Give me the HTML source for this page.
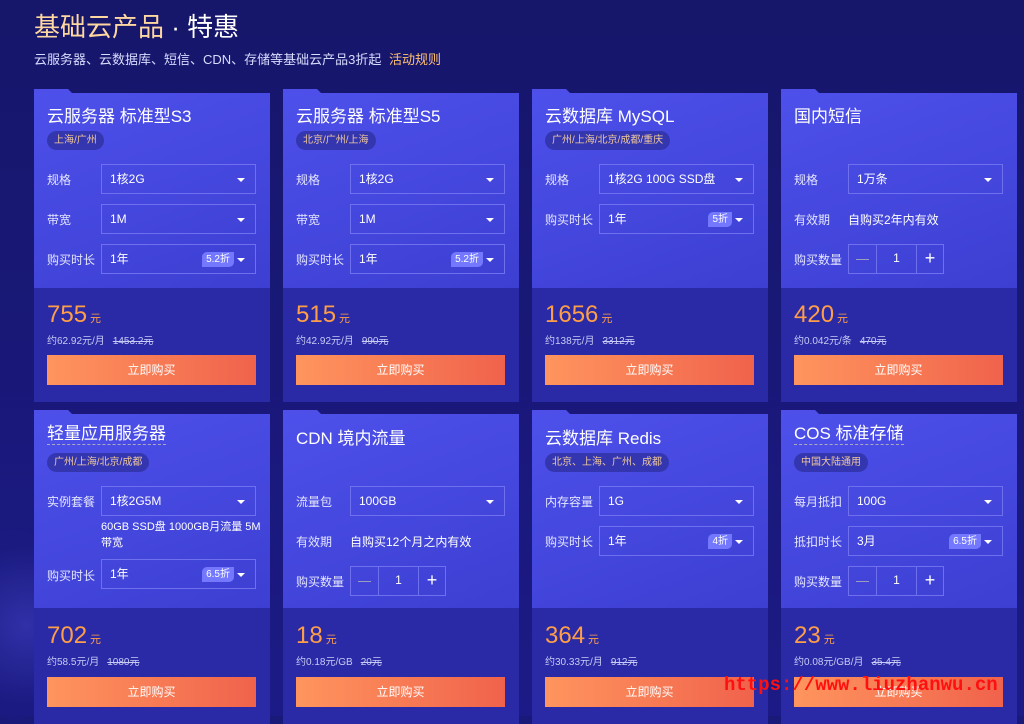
<!DOCTYPE html>
<html><head><meta charset="utf-8"><style>
*{margin:0;padding:0;box-sizing:border-box}
body{width:1024px;height:716px;overflow:hidden;background:#19197a;font-family:"Liberation Sans","Noto Sans CJK SC",sans-serif;position:relative;color:#fff}
.bg{position:absolute;inset:0;background:linear-gradient(180deg,#16166a 0%,#1c1a86 100%)}
h1{position:absolute;left:34px;top:7px;font-size:26px;font-weight:normal;color:#ffd7a0;letter-spacing:0}
h1 span{color:#fff}
.sub{position:absolute;left:34px;top:49px;font-size:13px;color:#d8dcff}
.sub b{font-weight:normal;color:#ffc070;margin-left:4px}
.card{position:absolute;width:236px;background:#2a2aa6}
.card:before{content:"";position:absolute;left:0;top:-4px;width:40px;height:6px;background:#4d4fe8;clip-path:polygon(0 0,34px 0,40px 100%,0 100%)}
.top{position:absolute;left:0;top:0;width:236px;background:linear-gradient(160deg,#4d50ea 0%,#3d3fd2 100%)}
.t{position:absolute;left:13px;font-size:17px;color:#fff;white-space:nowrap}
.t.u{border-bottom:1px dashed #aab;line-height:20px}
.tag{position:absolute;left:13px;height:19px;line-height:19px;padding:0 7px;border-radius:10px;background:#3436b0;font-size:10px;color:#f0c89c;white-space:nowrap}
.lb{position:absolute;left:13px;font-size:12px;color:#e4e6ff;white-space:nowrap}
.sel{position:absolute;left:67px;width:155px;height:30px;border:1px solid #6e70f0;font-size:12px;line-height:28px;padding-left:8px;color:#fff}
.sel:after{content:"";position:absolute;right:10px;top:13px;border:4px solid transparent;border-top:4px solid #fff;border-bottom:0}
.disc{position:absolute;right:21px;top:7px;height:15px;line-height:15px;padding:0 4px;border-radius:5px 0 5px 0;background:#7378ff;font-size:10px}
.txt{position:absolute;left:67px;font-size:12px;color:#fff;white-space:nowrap}
.step{position:absolute;left:67px;width:96px;height:30px;border:1px solid #6e70f0;display:flex}
.step div{height:28px;line-height:27px;text-align:center;font-size:13px}
.step div:nth-child(1){width:28px;border-right:1px solid #6e70f0;color:#aab}
.step div:nth-child(2){width:40px;border-right:1px solid #6e70f0;font-size:12px}
.step div:nth-child(3){flex:1;font-size:18px}
.pr{position:absolute;left:13px;font-size:24px;color:#ff9e48;white-space:nowrap}
.pr small{font-size:11px;margin-left:3px}
.ps{position:absolute;left:13px;font-size:10px;color:#c8cbf5;white-space:nowrap}
.ps s{margin-left:8px}
.btn{position:absolute;left:13px;width:209px;height:30px;line-height:30px;text-align:center;font-size:12px;background:linear-gradient(90deg,#ff955e,#f0624c)}
.wm{position:absolute;left:724px;top:674px;font-family:"Liberation Mono",monospace;font-size:19px;color:#ff1010;font-weight:bold;white-space:nowrap}
.ring{position:absolute;left:-40px;top:530px;width:110px;height:190px;border-radius:50%;background:radial-gradient(circle at 60% 50%,#3a3ab8,#1a1a80 70%);opacity:.7}
</style></head><body>
<div class="bg"></div>
<div class="ring"></div>
<h1>基础云产品<span> · 特惠</span></h1>
<div class="sub">云服务器、云数据库、短信、CDN、存储等基础云产品3折起 <b>活动规则</b></div>

<!-- Row 1 -->
<div class="card" style="left:34px;top:93px;height:309px">
<div class="top" style="height:195px"></div>
<div class="t" style="top:9px">云服务器 标准型S3</div>
<div class="tag" style="top:38px">上海/广州</div>
<div class="lb" style="top:78px">规格</div><div class="sel" style="top:71px">1核2G</div>
<div class="lb" style="top:118px">带宽</div><div class="sel" style="top:111px">1M</div>
<div class="lb" style="top:158px">购买时长</div><div class="sel" style="top:151px">1年<span class="disc">5.2折</span></div>
<div class="pr" style="top:208px">755<small>元</small></div>
<div class="ps" style="top:239px">约62.92元/月<s>1453.2元</s></div>
<div class="btn" style="top:262px">立即购买</div>
</div>
<div class="card" style="left:283px;top:93px;height:309px">
<div class="top" style="height:195px"></div>
<div class="t" style="top:9px">云服务器 标准型S5</div>
<div class="tag" style="top:38px">北京/广州/上海</div>
<div class="lb" style="top:78px">规格</div><div class="sel" style="top:71px">1核2G</div>
<div class="lb" style="top:118px">带宽</div><div class="sel" style="top:111px">1M</div>
<div class="lb" style="top:158px">购买时长</div><div class="sel" style="top:151px">1年<span class="disc">5.2折</span></div>
<div class="pr" style="top:208px">515<small>元</small></div>
<div class="ps" style="top:239px">约42.92元/月<s>990元</s></div>
<div class="btn" style="top:262px">立即购买</div>
</div>
<div class="card" style="left:532px;top:93px;height:309px">
<div class="top" style="height:195px"></div>
<div class="t" style="top:9px">云数据库 MySQL</div>
<div class="tag" style="top:38px">广州/上海/北京/成都/重庆</div>
<div class="lb" style="top:78px">规格</div><div class="sel" style="top:71px">1核2G 100G SSD盘</div>
<div class="lb" style="top:118px">购买时长</div><div class="sel" style="top:111px">1年<span class="disc">5折</span></div>
<div class="pr" style="top:208px">1656<small>元</small></div>
<div class="ps" style="top:239px">约138元/月<s>3312元</s></div>
<div class="btn" style="top:262px">立即购买</div>
</div>
<div class="card" style="left:781px;top:93px;height:309px">
<div class="top" style="height:195px"></div>
<div class="t" style="top:9px">国内短信</div>
<div class="lb" style="top:78px">规格</div><div class="sel" style="top:71px">1万条</div>
<div class="lb" style="top:118px">有效期</div><div class="txt" style="top:118px">自购买2年内有效</div>
<div class="lb" style="top:158px">购买数量</div><div class="step" style="top:151px"><div>—</div><div>1</div><div>+</div></div>
<div class="pr" style="top:208px">420<small>元</small></div>
<div class="ps" style="top:239px">约0.042元/条<s>470元</s></div>
<div class="btn" style="top:262px">立即购买</div>
</div>

<!-- Row 2 -->
<div class="card" style="left:34px;top:414px;height:310px">
<div class="top" style="height:194px"></div>
<div class="t u" style="top:10px">轻量应用服务器</div>
<div class="tag" style="top:39px">广州/上海/北京/成都</div>
<div class="lb" style="top:79px">实例套餐</div><div class="sel" style="top:72px">1核2G5M</div>
<div class="txt" style="top:105px;font-size:11px;white-space:normal;width:160px;line-height:16px">60GB SSD盘 1000GB月流量 5M 带宽</div>
<div class="lb" style="top:153px">购买时长</div><div class="sel" style="top:145px">1年<span class="disc">6.5折</span></div>
<div class="pr" style="top:208px">702<small>元</small></div>
<div class="ps" style="top:239px">约58.5元/月<s>1080元</s></div>
<div class="btn" style="top:263px">立即购买</div>
</div>
<div class="card" style="left:283px;top:414px;height:310px">
<div class="top" style="height:194px"></div>
<div class="t" style="top:10px">CDN 境内流量</div>
<div class="lb" style="top:79px">流量包</div><div class="sel" style="top:72px">100GB</div>
<div class="lb" style="top:119px">有效期</div><div class="txt" style="top:119px">自购买12个月之内有效</div>
<div class="lb" style="top:159px">购买数量</div><div class="step" style="top:152px"><div>—</div><div>1</div><div>+</div></div>
<div class="pr" style="top:208px">18<small>元</small></div>
<div class="ps" style="top:239px">约0.18元/GB<s>20元</s></div>
<div class="btn" style="top:263px">立即购买</div>
</div>
<div class="card" style="left:532px;top:414px;height:310px">
<div class="top" style="height:194px"></div>
<div class="t" style="top:10px">云数据库 Redis</div>
<div class="tag" style="top:39px">北京、上海、广州、成都</div>
<div class="lb" style="top:79px">内存容量</div><div class="sel" style="top:72px">1G</div>
<div class="lb" style="top:119px">购买时长</div><div class="sel" style="top:112px">1年<span class="disc">4折</span></div>
<div class="pr" style="top:208px">364<small>元</small></div>
<div class="ps" style="top:239px">约30.33元/月<s>912元</s></div>
<div class="btn" style="top:263px">立即购买</div>
</div>
<div class="card" style="left:781px;top:414px;height:310px">
<div class="top" style="height:194px"></div>
<div class="t u" style="top:10px">COS 标准存储</div>
<div class="tag" style="top:39px">中国大陆通用</div>
<div class="lb" style="top:79px">每月抵扣</div><div class="sel" style="top:72px">100G</div>
<div class="lb" style="top:119px">抵扣时长</div><div class="sel" style="top:112px">3月<span class="disc">6.5折</span></div>
<div class="lb" style="top:159px">购买数量</div><div class="step" style="top:152px"><div>—</div><div>1</div><div>+</div></div>
<div class="pr" style="top:208px">23<small>元</small></div>
<div class="ps" style="top:239px">约0.08元/GB/月<s>35.4元</s></div>
<div class="btn" style="top:263px">立即购买</div>
</div>
<div class="wm">https://www.liuzhanwu.cn</div>
</body></html>
